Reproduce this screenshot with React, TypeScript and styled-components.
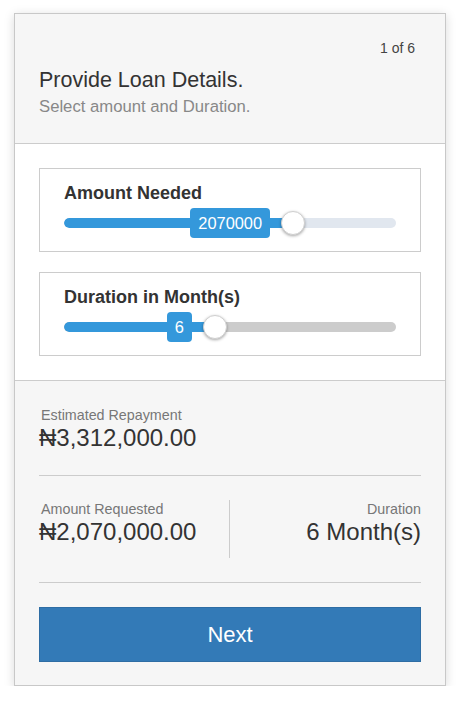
import React from "react";
import styled, { createGlobalStyle } from "styled-components";

const Global = createGlobalStyle`
  html, body { margin: 0; padding: 0; background: #fff; }
  body { font-family: "Liberation Sans", Arial, sans-serif; color: #333; }
  * { box-sizing: border-box; }
`;

const Card = styled.div`
  width: 432px;
  margin: 13px 0 0 14px;
  border: 1px solid #c8c8c8;
  background: #fff;
  box-shadow: 0 2px 10px rgba(0, 0, 0, 0.15);
`;

const Header = styled.div`
  background: #f6f6f6;
  border-bottom: 1px solid #ccc;
  padding: 26px 30px 26px 24px;
`;

const Step = styled.div`
  text-align: right;
  font-size: 14px;
  line-height: 17px;
  color: #444;
  margin-bottom: 11px;
`;

const Title = styled.h1`
  margin: 0 0 4px;
  font-size: 21.5px;
  line-height: 25px;
  font-weight: normal;
  color: #333;
`;

const Subtitle = styled.p`
  margin: 0;
  font-size: 16.7px;
  line-height: 20px;
  color: #888;
`;

const Body = styled.div`
  padding: 24px 24px 24px;
  display: flex;
  flex-direction: column;
  gap: 20px;
`;

const SliderBox = styled.div`
  border: 1px solid #ccc;
  padding: 14px 24px 13px;
`;

const SliderLabel = styled.div`
  font-size: 18px;
  line-height: 20px;
  font-weight: bold;
  color: #333;
  margin-bottom: 5px;
`;

const SliderRow = styled.div`
  position: relative;
  height: 30px;
  display: flex;
  align-items: center;
`;

const Track = styled.div<{ $rest: string }>`
  position: relative;
  width: 100%;
  height: 10px;
  border-radius: 5px;
  background: ${(p) => p.$rest};
  overflow: hidden;
`;

const Fill = styled.div`
  height: 100%;
  background: #3498db;
  border-radius: 5px 0 0 5px;
`;

const Thumb = styled.div`
  position: absolute;
  top: 3px;
  width: 24px;
  height: 24px;
  margin-left: -12px;
  border-radius: 50%;
  background: #fff;
  border: 1px solid #d0d0d0;
  box-shadow: 0 1px 3px rgba(0, 0, 0, 0.35);
`;

const Bubble = styled.div`
  position: absolute;
  top: 0;
  height: 30px;
  padding: 0 8px;
  min-width: 24px;
  border-radius: 4px;
  background: #3498db;
  color: #fff;
  font-size: 16.4px;
  line-height: 30px;
  text-align: center;
`;

const Footer = styled.div`
  background: #f6f6f6;
  border-top: 1px solid #ccc;
  padding: 26px 24px 23px;
`;

const Summary = styled.div`
  padding-bottom: 23px;
  border-bottom: 1px solid #ccc;
`;

const Label = styled.div<{ $right?: boolean }>`
  font-size: 14.3px;
  line-height: 17px;
  color: #777;
  padding-left: 2px;
  text-align: ${(p) => (p.$right ? "right" : "left")};
`;

const Value = styled.div<{ $right?: boolean }>`
  font-size: 24px;
  line-height: 28px;
  color: #333;
  text-align: ${(p) => (p.$right ? "right" : "left")};
`;

const Split = styled.div`
  display: grid;
  grid-template-columns: 190px 1fr;
  margin: 24px 0;
`;

const Col = styled.div<{ $divider?: boolean }>`
  min-height: 58px;
  padding-top: 1px;
  ${(p) => (p.$divider ? "border-left: 1px solid #ccc;" : "")}
`;

const Rule = styled.div`
  height: 1px;
  background: #ccc;
`;

const NextButton = styled.button`
  display: block;
  width: 100%;
  height: 55px;
  margin-top: 24px;
  background: #337ab7;
  border: 1px solid #2e6da4;
  border-radius: 0;
  color: #fff;
  font-family: "Liberation Sans", Arial, sans-serif;
  font-size: 22px;
  cursor: pointer;
`;

type SliderProps = { label: string; value: string; pct: number; rest: string };

function Slider({ label, value, pct, rest }: SliderProps) {
  return (
    <SliderBox>
      <SliderLabel>{label}</SliderLabel>
      <SliderRow>
        <Track $rest={rest}>
          <Fill style={{ width: `${pct}%` }} />
        </Track>
        <Bubble style={{ right: `calc(${100 - pct}% + 23px)` }}>{value}</Bubble>
        <Thumb style={{ left: `${pct}%` }} />
      </SliderRow>
    </SliderBox>
  );
}

export default function App() {
  return (
    <>
      <Global />
      <Card>
        <Header>
          <Step>1 of 6</Step>
          <Title>Provide Loan Details.</Title>
          <Subtitle>Select amount and Duration.</Subtitle>
        </Header>
        <Body>
          <Slider label="Amount Needed" value="2070000" pct={69} rest="#e1e7ef" />
          <Slider label="Duration in Month(s)" value="6" pct={45.45} rest="#cccccc" />
        </Body>
        <Footer>
          <Summary>
            <Label>Estimated Repayment</Label>
            <Value>₦3,312,000.00</Value>
          </Summary>
          <Split>
            <Col>
              <Label>Amount Requested</Label>
              <Value>₦2,070,000.00</Value>
            </Col>
            <Col $divider>
              <Label $right>Duration</Label>
              <Value $right>6 Month(s)</Value>
            </Col>
          </Split>
          <Rule />
          <NextButton>Next</NextButton>
        </Footer>
      </Card>
    </>
  );
}
